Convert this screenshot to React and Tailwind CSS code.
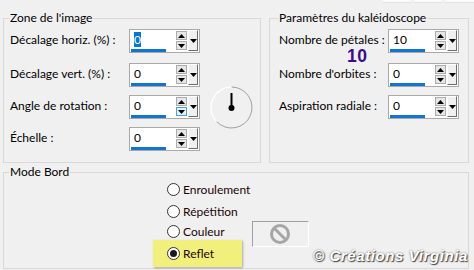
import React from "react";

function Up() {
  return (
    <svg width="7" height="4" viewBox="0 0 7 4"><path d="M0 4 L3.5 0 L7 4 Z" fill="#000" /></svg>
  );
}
function Down() {
  return (
    <svg width="7" height="4" viewBox="0 0 7 4"><path d="M0 0 L3.5 4 L7 0 Z" fill="#000" /></svg>
  );
}

function Spin({ value, selected, hoverDown }) {
  return (
    <div className="flex h-[24px] w-[71px] shrink-0 border border-[#a9a9a9] bg-white">
      <div className="flex w-[46px] flex-col">
        <div className="flex flex-1 items-center pl-[4px] text-[12px] leading-[15px] text-black">
          {selected ? (
            <span className="bg-[#0078d7] px-[0px] text-white">{value}</span>
          ) : (
            <span>{value}</span>
          )}
        </div>
        <div className="ml-[1px] h-[3px] w-[35px] bg-[#0f75d0]" />
      </div>
      <div className="flex w-[11px] flex-col gap-[1px] pt-[1px]">
        <div className="flex h-[9px] items-center justify-center border border-[#adadad] bg-[#e6e6e6]">
          <Up />
        </div>
        <div
          className={
            hoverDown
              ? "flex h-[9px] items-center justify-center border border-[#4aa0e8] bg-[#e5f1fb]"
              : "flex h-[9px] items-center justify-center border border-[#adadad] bg-[#e6e6e6]"
          }
        >
          <Down />
        </div>
      </div>
      <div className="ml-[1px] mt-[0px] flex h-[21px] w-[10px] items-center justify-center border-b border-l border-r border-t border-b-[#6d6d6d] border-l-white border-r-[#6d6d6d] border-t-white bg-[#f0f0f0]">
        <Down />
      </div>
    </div>
  );
}

function Dial() {
  return (
    <svg width="43" height="43" viewBox="0 0 43 43" className="shrink-0">
      <path d="M 21.5 1 A 20.5 20.5 0 1 1 6.5 35.5" fill="none" stroke="#a0a0a0" strokeWidth="1" />
      <path d="M 6.5 35.5 A 20.5 20.5 0 0 1 21.5 1" fill="none" stroke="#ffffff" strokeWidth="1.2" />
      <line x1="21.5" y1="7" x2="21.5" y2="21" stroke="#000" strokeWidth="2" />
      <circle cx="21.5" cy="22" r="3" fill="#000" />
    </svg>
  );
}

function Radio({ checked }) {
  return (
    <div className="flex h-[13px] w-[13px] shrink-0 items-center justify-center rounded-full border border-[#333333] bg-white">
      {checked ? <div className="h-[7px] w-[7px] rounded-full bg-[#1a1a1a]" /> : null}
    </div>
  );
}

function Label({ w, children }) {
  return <div className={`${w} mb-[4px] shrink-0 leading-[13px]`}>{children}</div>;
}

export default function App() {
  const font = "font-['Segoe_UI','Lato','Liberation_Sans',sans-serif]";
  return (
    <div className={`flex h-[270px] w-[474px] flex-col overflow-hidden bg-[#f0f0f0] text-[12px] text-black ${font}`}>
      <div className="flex h-[3px] justify-end gap-[3px]">
        <div className="h-[3px] w-[28px] border-b border-[#e3e3e3] bg-[#fbfbfb]" />
        <div className="h-[3px] w-[28px] border-b border-[#e3e3e3] bg-[#fbfbfb]" />
        <div className="h-[3px] w-[29px] border-b border-[#e3e3e3] bg-[#fbfbfb]" />
      </div>
      <div className="ml-[3px] mt-[15px] flex gap-[8px]">
        {/* Zone de l'image */}
        <div className="flex h-[145px] w-[258px] flex-col border border-[#d9d9d9] pl-[6px]">
          <div className="-mt-[8px] ml-[-1px] w-fit bg-[#f0f0f0] px-[1px] leading-[14px]">Zone de l'image</div>
          <div className="mt-[4px] flex h-[24px] items-center">
            <Label w="w-[119px]">Décalage horiz. (%) :</Label>
            <Spin value="0" selected />
          </div>
          <div className="mt-[10px] flex h-[24px] items-center">
            <Label w="w-[119px]">Décalage vert. (%) :</Label>
            <Spin value="0" />
          </div>
          <div className="mt-[8px] flex h-[24px] items-center">
            <Label w="w-[119px]">Angle de rotation :</Label>
            <Spin value="0" hoverDown />
            <div className="-my-[10px] ml-[10px]">
              <Dial />
            </div>
          </div>
          <div className="mt-[8px] flex h-[24px] items-center">
            <Label w="w-[119px]">Échelle :</Label>
            <Spin value="0" />
          </div>
        </div>
        {/* Paramètres */}
        <div className="relative flex h-[145px] w-[200px] flex-col border border-[#d9d9d9] pl-[9px]">
          <div className="-mt-[8px] ml-[-1px] w-fit bg-[#f0f0f0] px-[1px] leading-[14px]">Paramètres du kaléidoscope</div>
          <div className="mt-[4px] flex h-[24px] items-center">
            <Label w="w-[109px]">Nombre de pétales :</Label>
            <Spin value="10" />
          </div>
          <div className="mt-[10px] flex h-[24px] items-center">
            <Label w="w-[109px]">Nombre d'orbites :</Label>
            <Spin value="0" />
          </div>
          <div className="mt-[8px] flex h-[24px] items-center">
            <Label w="w-[109px]">Aspiration radiale :</Label>
            <Spin value="0" />
          </div>
          <div className="absolute left-[77px] top-[27.5px] font-['Liberation_Sans',sans-serif] text-[17.5px] font-bold leading-[19.5px] tracking-[0.5px] text-[#3b0c8c]">
            10
          </div>
        </div>
      </div>
      {/* Mode Bord */}
      <div className="ml-[3px] mt-[9px] flex h-[97px] w-[466px] flex-col border border-[#d9d9d9] pl-[6px]">
        <div className="-mt-[8px] ml-[-1px] w-fit bg-[#f0f0f0] px-[1px] leading-[14px]">Mode Bord</div>
        <div className="flex flex-1">
          <div className="ml-[143px] flex w-[89px] flex-col">
            <div className="flex h-[21px] items-center gap-[3px] pl-[14px]">
              <Radio />
              <span className="whitespace-nowrap text-[#1a0505]">Enroulement</span>
            </div>
            <div className="flex h-[23px] items-center gap-[3px] pl-[14px]">
              <Radio />
              <span className="text-[#1a0505]">Répétition</span>
            </div>
            <div className="flex h-[17px] items-center gap-[3px] pl-[14px]">
              <Radio />
              <span className="text-[#1a0505]">Couleur</span>
            </div>
            <div className="flex h-[27px] items-center gap-[3px] bg-[#f1f07c] pl-[14px] shadow-[1px_1px_2px_rgba(0,0,0,0.3)]">
              <Radio checked />
              <span className="text-[#1a0505]">Reflet</span>
            </div>
          </div>
          <div className="ml-[10px] mt-[42px] flex h-[26px] w-[58px] items-center justify-center border-b border-l border-r border-t border-b-white border-l-[#a0a0a0] border-r-white border-t-[#a0a0a0] bg-[#f0f0f0]">
            <svg width="22" height="22" viewBox="0 0 22 22">
              <circle cx="11" cy="11" r="8.5" fill="none" stroke="#a6a6a6" strokeWidth="3" />
              <line x1="5" y1="5" x2="17" y2="17" stroke="#a6a6a6" strokeWidth="3" />
            </svg>
          </div>
          <div className="mb-[3px] ml-[4px] self-end whitespace-nowrap font-['Liberation_Sans',sans-serif] text-[15px] font-bold italic leading-[18px] tracking-[0.6px] text-white [text-shadow:1px_1px_1px_#444,0_0_2px_#666]">
            © Créations Virginia
          </div>
        </div>
      </div>
    </div>
  );
}
